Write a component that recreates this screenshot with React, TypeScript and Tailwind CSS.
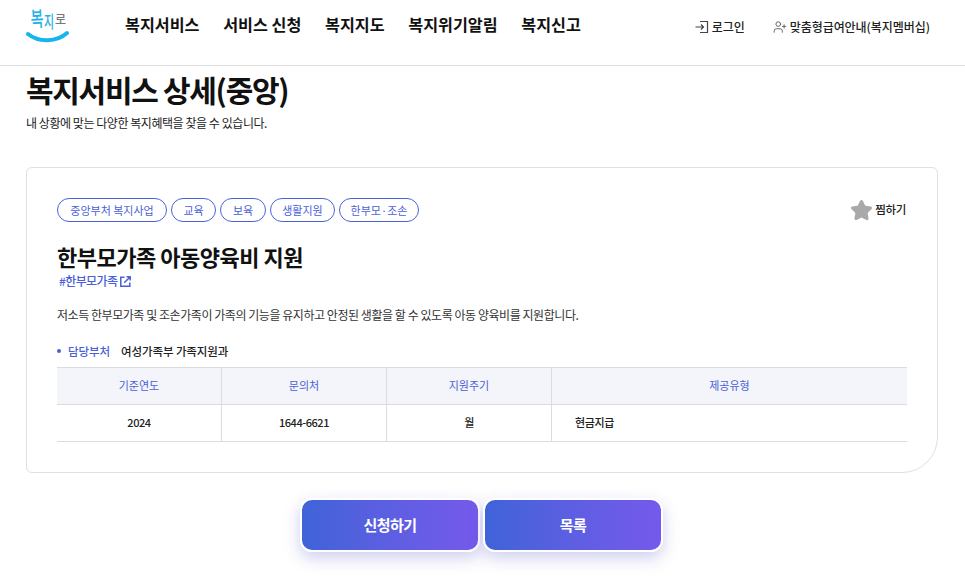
import React from "react";
import { UserPlus, Star } from "lucide-react";

const FONT = "font-['Noto_Sans_CJK_KR','Noto_Sans',sans-serif]";

const navItems = ["복지서비스", "서비스 신청", "복지지도", "복지위기알림", "복지신고"];
const tags = [
    { label: "중앙부처 복지사업", width: "w-[110px]" },
    { label: "교육", width: "w-[45px]" },
    { label: "보육", width: "w-[46px]" },
    { label: "생활지원", width: "w-[65px]" },
    { label: "한부모·조손", width: "w-[80px]" },
];

function Logo() {
    return (
        <div className="relative w-[46px] h-[44px]">
            <span className="absolute left-[4px] top-[7px] text-[14px] leading-none font-medium text-[#27b2e6] scale-y-[1.5] origin-top -rotate-3">복</span>
            <span className="absolute left-[18px] top-[13px] text-[11px] leading-none font-medium text-[#27b2e6] scale-y-[1.5] origin-top">지</span>
            <span className="absolute left-[29px] top-[13px] text-[12px] leading-none font-medium text-[#77787c]">로</span>
            <svg className="absolute left-0 top-[30px]" width="46" height="15" viewBox="0 0 46 15">
                <path d="M2 4 C 13 13, 31 12, 41 3" fill="none" stroke="#17b4ee" strokeWidth="4" strokeLinecap="round" />
            </svg>
        </div>
    );
}

function LoginIcon() {
    return (
        <svg width="14" height="14" viewBox="0 0 14 14" fill="none" stroke="#444" strokeWidth="1.2">
            <path d="M0.5 7H8.5M6 4.5L8.5 7L6 9.5" />
            <path d="M5 1.5H12.5V12.5H5" />
        </svg>
    );
}

function LinkIcon() {
    return (
        <svg width="11" height="11" viewBox="0 0 11 11" fill="none" stroke="#4a5fd8" strokeWidth="1.5">
            <path d="M4.5 1.2H0.8V10.2H9.8V6.5" />
            <path d="M4.2 6.8L9.8 1.2M6.5 0.8H10.2V4.5" />
        </svg>
    );
}

function Header() {
    return (
        <header className="h-[66px] border-b border-[#dedede] flex items-start pl-[26px] pr-[35px]">
            <div className="w-[99px]">
                <Logo />
            </div>
            <nav className="flex gap-[23.7px] pt-[13px] text-[16.2px] font-bold text-[#111] leading-[22px]">
                {navItems.map((item) => (
                    <span key={item}>{item}</span>
                ))}
            </nav>
            <div className="ml-auto flex items-center gap-[28px] pt-[18px] text-[12px] font-medium text-[#222] leading-[18px] tracking-[-0.05px]">
                <span className="flex items-center gap-[3px]">
                    <LoginIcon />
                    로그인
                </span>
                <span className="flex items-center gap-[3px]">
                    <UserPlus className="w-[14px] h-[14px] text-[#555]" strokeWidth={1.5} />
                    맞춤형급여안내(복지멤버십)
                </span>
            </div>
        </header>
    );
}

function Table() {
    const headCls = "flex items-center justify-center border-r border-[#dcdcdf] text-[#4a5fd8] pb-[2px]";
    const cellCls = "flex items-center justify-center border-r border-[#dcdcdf] font-medium text-[#222] tracking-[-0.45px] pb-[2px]";
    return (
        <div className="grid grid-cols-[165px_165px_165px_1fr] text-[11px] border-t border-[#dcdcdf]">
            <div className={`${headCls} h-[37px] bg-[#f4f5fa] border-b`}>기준연도</div>
            <div className={`${headCls} h-[37px] bg-[#f4f5fa] border-b`}>문의처</div>
            <div className={`${headCls} h-[37px] bg-[#f4f5fa] border-b`}>지원주기</div>
            <div className="flex items-center justify-center h-[37px] bg-[#f4f5fa] border-b border-[#dcdcdf] text-[#4a5fd8] pb-[2px]">제공유형</div>
            <div className={`${cellCls} h-[37px] border-b`}>2024</div>
            <div className={`${cellCls} h-[37px] border-b`}>1644-6621</div>
            <div className={`${cellCls} h-[37px] border-b`}>월</div>
            <div className="flex items-center h-[37px] border-b border-[#dcdcdf] pl-[23px] font-medium text-[#222] tracking-[-0.4px] pb-[2px]">현금지급</div>
        </div>
    );
}

function ActionButton({ label }: { label: string }) {
    return (
        <button className="w-[180px] h-[54px] rounded-[12px] border-2 border-white bg-gradient-to-r from-[#3f63d8] to-[#7559ec] text-white text-[15px] font-bold tracking-[-0.5px] shadow-[0_6px_16px_rgba(80,80,200,0.28)]">
            {label}
        </button>
    );
}

export default function App() {
    return (
        <div className={`${FONT} w-[965px] h-[577px] overflow-hidden bg-white`}>
            <Header />
            <main className="px-[26px]">
                <h1 className="text-[30px] font-bold text-[#111] leading-[46px] mb-[2px] tracking-[-1.3px]">복지서비스 상세(중앙)</h1>
                <p className="text-[12px] text-[#222] leading-[18px] tracking-[-0.45px]">내 상황에 맞는 다양한 복지혜택을 찾을 수 있습니다.</p>

                <section className="mt-[35px] w-[912px] h-[306px] border border-[#e0e0e0] rounded-tl-[6px] rounded-tr-[6px] rounded-bl-[6px] rounded-br-[36px] px-[30px] pt-[30px]">
                    <div className="flex items-center justify-between">
                        <div className="flex gap-[4px]">
                            {tags.map((tag) => (
                                <span key={tag.label} className={`${tag.width} h-[24px] rounded-full border border-[#4a63d8] text-[11px] text-[#4a5fd8] flex items-center justify-center`}>
                                    {tag.label}
                                </span>
                            ))}
                        </div>
                        <span className="flex items-center gap-[2px] pr-[1px] text-[11.5px] font-medium text-[#222] tracking-[-0.3px]">
                            <Star className="w-[23px] h-[23px] text-[#a9a9a9] fill-[#a9a9a9]" />
                            찜하기
                        </span>
                    </div>
                    <h2 className="mt-[18px] text-[22px] font-bold text-[#111] leading-[33px] tracking-[-0.5px]">한부모가족 아동양육비 지원</h2>
                    <div className="pl-[2px] flex items-center gap-[3px] text-[12px] font-medium text-[#4a5fd8] leading-[16px] tracking-[-0.6px]">
                        #한부모가족
                        <LinkIcon />
                    </div>
                    <p className="mt-[17px] text-[12px] text-[#333] leading-[18px] tracking-[-0.45px]">
                        저소득 한부모가족 및 조손가족이 가족의 기능을 유지하고 안정된 생활을 할 수 있도록 아동 양육비를 지원합니다.
                    </p>
                    <div className="mt-[17px] flex items-center text-[11.5px] font-medium leading-[18px] h-[19px] tracking-[-0.1px]">
                        <span className="w-[4px] h-[4px] rounded-full bg-[#4a5fd8] mr-[7px]" />
                        <span className="text-[#4a5fd8] w-[53px]">담당부처</span>
                        <span className="text-[#222]">여성가족부 가족지원과</span>
                    </div>
                    <div className="mt-[7px]">
                        <Table />
                    </div>
                </section>

                <div className="mt-[25px] flex justify-center gap-[3px] pr-[2px]">
                    <ActionButton label="신청하기" />
                    <ActionButton label="목록" />
                </div>
            </main>
        </div>
    );
}
